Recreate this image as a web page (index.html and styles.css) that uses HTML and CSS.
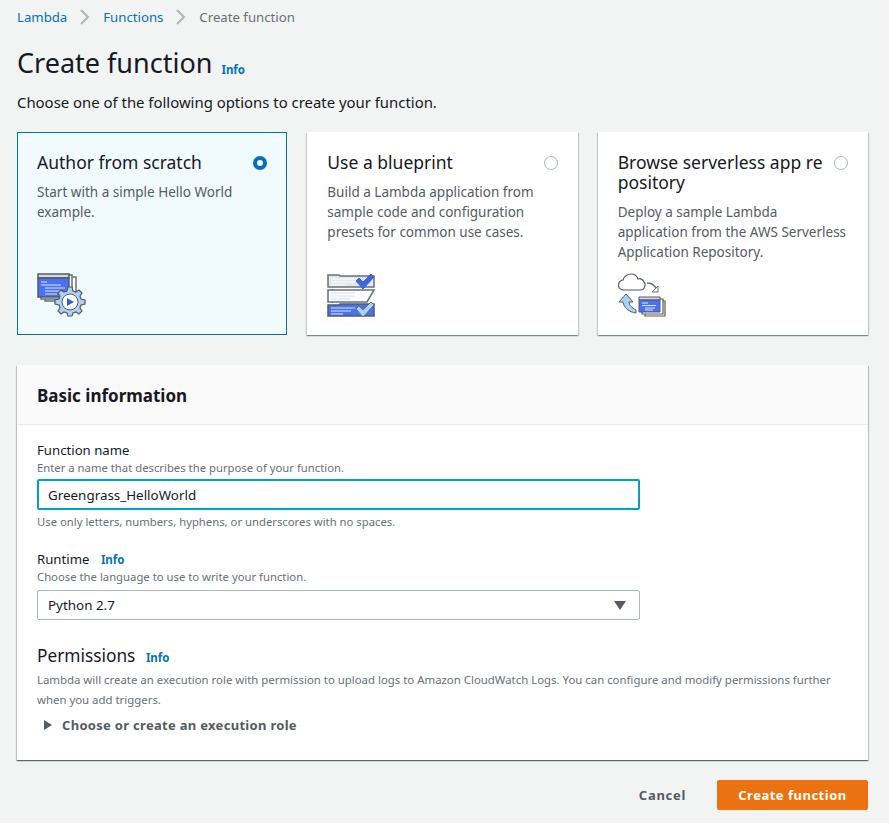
FILE: index.html
```html
<!DOCTYPE html>
<html lang="en">
<head>
    <meta charset="UTF-8">
    <title>Create function</title>
    <link rel="stylesheet" href="styles.css">
</head>
<body>
    <div class="container">
        <nav class="breadcrumbs">
            <a href="#">Lambda</a>
            <svg class="crumb-sep" width="10" height="16" viewBox="0 0 10 16"><path d="M1 1l7 7-7 7" fill="none" stroke="#aab7b8" stroke-width="2"/></svg>
            <a href="#">Functions</a>
            <svg class="crumb-sep" width="10" height="16" viewBox="0 0 10 16"><path d="M1 1l7 7-7 7" fill="none" stroke="#aab7b8" stroke-width="2"/></svg>
            <span class="crumb-current">Create function</span>
        </nav>

        <div class="page-title">
            <h1>Create function</h1>
            <a class="info" href="#">Info</a>
        </div>
        <p class="page-desc">Choose one of the following options to create your function.</p>

        <div class="cards">
            <div class="card selected">
                <div class="card-head">
                    <h3>Author from scratch</h3>
                    <span class="radio checked"></span>
                </div>
                <p>Start with a simple Hello World example.</p>
                <svg class="card-icon" width="50" height="46" viewBox="0 0 50 46">
                    <path d="M8 4h31v24H8z" fill="#fff" stroke="#687078" stroke-width="1.5"/>
                    <path d="M4 2h31v24H4z" fill="#fff" stroke="#687078" stroke-width="1.5"/>
                    <path d="M1 1h31v4H1z" fill="#d5dbdb" stroke="#545b64" stroke-width="1.5"/>
                    <path d="M1 5h31v19H1z" fill="#4a72f0" stroke="#545b64" stroke-width="1.5"/>
                    <path d="M4 9h6M4 12h20M8 15h20M8 18h16M8 21h12" stroke="#dce6ff" stroke-width="1.2"/>
                    <path d="M31 14h4l1 4 3 1 3-2 3 3-2 3 1 3 4 1v4l-4 1-1 3 2 3-3 3-3-2-3 1-1 3h-4l-1-3-3-1-3 2-3-3 2-3-1-3-4-1v-4l4-1 1-3-2-3 3-3 3 2 3-1z" fill="#a9d2f5" stroke="#545b64" stroke-width="1.2"/>
                    <circle cx="33" cy="29" r="8" fill="#fff" stroke="#545b64" stroke-width="1"/>
                    <path d="M30 25l7 4-7 4z" fill="#2e62d9"/>
                </svg>
            </div>
            <div class="card">
                <div class="card-head">
                    <h3>Use a blueprint</h3>
                    <span class="radio"></span>
                </div>
                <p>Build a Lambda application from sample code and configuration presets for common use cases.</p>
                <svg class="card-icon" width="50" height="46" viewBox="0 0 50 46">
                    <path d="M1 2h11l1 1h34v11H1z" fill="#e4e6e8" stroke="#687078" stroke-width="1.5"/>
                    <path d="M4 6h24M4 9h24M4 12h14" stroke="#fff" stroke-width="1.2"/>
                    <path d="M29 8l3-3 4 4 8-8 3 3-11 12z" fill="#3b66e0" stroke="#3b66e0"/>
                    <path d="M1 17h46l-7 12H1z" fill="#fff" stroke="#687078" stroke-width="1.5"/>
                    <path d="M4 20h24M4 23h24M4 26h20" stroke="#dcecfb" stroke-width="1.5"/>
                    <path d="M1 32h11l1-1h34v12H1z" fill="#4a72f0" stroke="#545b64" stroke-width="1.5"/>
                    <path d="M4 35h24M4 38h20M4 41h12" stroke="#dce6ff" stroke-width="1"/>
                    <path d="M29 36l3-3 4 4 8-8 3 3-11 12z" fill="#a9d2f5" stroke="#687078"/>
                </svg>
            </div>
            <div class="card">
                <div class="card-head">
                    <h3 class="break">Browse serverless app repository</h3>
                    <span class="radio"></span>
                </div>
                <p>Deploy a sample Lambda application from the AWS Serverless Application Repository.</p>
                <svg class="card-icon icon-repo" width="50" height="46" viewBox="0 0 50 46">
                    <path d="M6 17a5 5 0 0 1-1-10c1-4 5-6 8-6 3 0 6 2 7 5 3-1 5 1 6 3 2 1 1 8-3 8z" fill="#fff" stroke="#545b64" stroke-width="1.2"/>
                    <path d="M29 10c4 0 7 2 9 5" fill="none" stroke="#687078" stroke-width="1.5"/>
                    <path d="M40 13v6h-6z" fill="#fff" stroke="#687078"/>
                    <path d="M8 21l7 8h-4c0 3 3 6 7 8v3c-7-1-12-5-13-11H1z" fill="#a9d2f5" stroke="#545b64"/>
                    <path d="M27 28h20v15H27z" fill="#fff" stroke="#545b64" stroke-width="1.2"/>
                    <path d="M24 26h21v15H24z" fill="#fff" stroke="#545b64" stroke-width="1.2"/>
                    <path d="M21 24h21v3H21z" fill="#d5dbdb" stroke="#545b64"/>
                    <path d="M21 27h21v12H21z" fill="#4a72f0" stroke="#545b64"/>
                    <path d="M24 30h6M24 32.500h14M27 35h10M27 37h8" stroke="#dce6ff"/>
                </svg>
            </div>
        </div>

        <section class="panel">
            <div class="panel-head">
                <h2>Basic information</h2>
            </div>
            <div class="panel-body">
                <label class="field-label">Function name</label>
                <div class="hint">Enter a name that describes the purpose of your function.</div>
                <input class="text-input" type="text" value="Greengrass_HelloWorld">
                <div class="hint hint-below">Use only letters, numbers, hyphens, or underscores with no spaces.</div>

                <label class="field-label runtime-label">Runtime <a class="info" href="#">Info</a></label>
                <div class="hint">Choose the language to use to write your function.</div>
                <div class="select">
                    <span>Python 2.7</span>
                    <span class="select-arrow"></span>
                </div>

                <h4>Permissions <a class="info" href="#">Info</a></h4>
                <p class="perm-text">Lambda will create an execution role with permission to upload logs to Amazon CloudWatch Logs. You can configure and modify permissions further when you add triggers.</p>
                <div class="expander"><span class="expander-arrow"></span>Choose or create an execution role</div>
            </div>
        </section>

        <div class="actions">
            <button class="btn-link">Cancel</button>
            <button class="btn-primary">Create function</button>
        </div>
    </div>
</body>
</html>
```

FILE: styles.css
```css
* {
    box-sizing: border-box;
}

body {
    margin: 0;
    background-color: #f2f3f3;
    font-family: "Noto Sans", sans-serif;
    color: #16191f;
    font-size: 14px;
}

.container {
    padding: 0 21px 13px 17px;
}

a {
    color: #0073bb;
    text-decoration: none;
}

.breadcrumbs {
    display: flex;
    align-items: center;
    height: 34px;
    font-size: 13.2px;
    line-height: 18px;
}

.crumb-sep {
    margin: 0 13px;
}

.crumb-current {
    color: #687078;
}

.page-title {
    display: flex;
    align-items: flex-end;
    margin-top: 8px;
}

h1 {
    margin: 0;
    font-size: 27px;
    font-weight: 400;
    line-height: 42px;
}

.page-title .info {
    margin: 0 0 6px 9px;
    line-height: 16px;
}

.info {
    font-size: 11.5px;
    font-weight: 700;
}

.page-desc {
    margin: 8px 0 0;
    font-size: 14.9px;
    line-height: 21px;
}

.cards {
    display: grid;
    grid-template-columns: repeat(3, 1fr);
    gap: 20px;
    margin-top: 19px;
}

.card {
    position: relative;
    height: 203px;
    padding: 20px 20px;
    background-color: #fff;
    box-shadow: 0 1px 1px 0 rgba(0, 28, 36, 0.3), 1px 1px 1px 0 rgba(0, 28, 36, 0.15), -1px 1px 1px 0 rgba(0, 28, 36, 0.15);
}

.card.selected {
    background-color: #f1faff;
    border: 1px solid #0073bb;
    box-shadow: none;
    padding: 19px 19px;
}

.card-head {
    display: flex;
    justify-content: space-between;
    gap: 8px;
}

h3 {
    margin: 0;
    font-size: 17.5px;
    font-weight: 400;
    line-height: 20px;
}

h3.break {
    word-break: break-all;
}

.radio {
    flex: none;
    width: 14px;
    height: 14px;
    margin-top: 4px;
    border: 1px solid #aab7b8;
    border-radius: 50%;
    background-color: #fff;
}

.radio.checked {
    border: 4px solid #0073bb;
}

.card p {
    margin: 10px 0 0;
    font-size: 13.5px;
    line-height: 20px;
    color: #545b64;
}

.card-icon {
    position: absolute;
    left: 20px;
    top: 141px;
}

.selected .card-icon {
    left: 19px;
    top: 140px;
}

.panel {
    margin-top: 30px;
    background-color: #fff;
    box-shadow: 0 1px 1px 0 rgba(0, 28, 36, 0.5), 1px 1px 1px 0 rgba(0, 28, 36, 0.15), -1px 1px 1px 0 rgba(0, 28, 36, 0.15);
}

.panel-head {
    height: 60px;
    padding: 21px 20px 19px;
    background-color: #fafafa;
    border-bottom: 1px solid #eaeded;
}

h2 {
    margin: 0;
    font-size: 17px;
    font-weight: 700;
    line-height: 20px;
}

.panel-body {
    height: 335px;
    padding: 15px 20px;
}

.field-label {
    display: block;
    font-size: 13.2px;
    line-height: 20px;
}

.hint {
    font-size: 11.3px;
    line-height: 15px;
    color: #687078;
}

.hint-below {
    margin-top: 4px;
}

.runtime-label {
    margin-top: 21px;
    line-height: 18px;
}

.runtime-label .info {
    margin-left: 8px;
}

.text-input {
    display: block;
    width: 603px;
    height: 31px;
    margin-top: 4px;
    padding: 0 9px;
    border: 2px solid #00a1c9;
    border-radius: 2px;
    font-family: inherit;
    font-size: 13.4px;
    color: #16191f;
    outline: none;
}

.select {
    display: flex;
    align-items: center;
    justify-content: space-between;
    width: 603px;
    height: 30px;
    margin-top: 6px;
    padding: 0 13px 0 10px;
    border: 1px solid #aab7b8;
    border-radius: 2px;
    font-size: 13.4px;
}

.select-arrow {
    width: 0;
    height: 0;
    border-left: 6px solid transparent;
    border-right: 6px solid transparent;
    border-top: 9px solid #545b64;
}

h4 {
    margin: 25px 0 0;
    font-size: 17.3px;
    font-weight: 400;
    line-height: 22px;
}

h4 .info {
    margin-left: 6px;
}

.perm-text {
    margin: 1px 0 0;
    font-size: 11.4px;
    line-height: 20px;
    color: #687078;
}

.expander {
    display: flex;
    align-items: center;
    margin-top: 5px;
    font-size: 13px;
    font-weight: 700;
    line-height: 20px;
    color: #545b64;
    letter-spacing: 0.3px;
}

.expander-arrow {
    width: 0;
    height: 0;
    margin: 0 10px 0 7px;
    border-top: 5px solid transparent;
    border-bottom: 5px solid transparent;
    border-left: 8px solid #545b64;
}

.actions {
    display: flex;
    justify-content: flex-end;
    align-items: center;
    margin-top: 20px;
}

.btn-link {
    margin-right: 20px;
    padding: 0 11px;
    height: 30px;
    border: none;
    background: none;
    font-family: inherit;
    font-size: 13px;
    font-weight: 700;
    color: #545b64;
    letter-spacing: 0.7px;
}

.btn-primary {
    width: 151px;
    height: 30px;
    border: none;
    border-radius: 2px;
    background-color: #ec7211;
    font-family: inherit;
    font-size: 13px;
    font-weight: 700;
    color: #fff;
    letter-spacing: 0.5px;
}
```
